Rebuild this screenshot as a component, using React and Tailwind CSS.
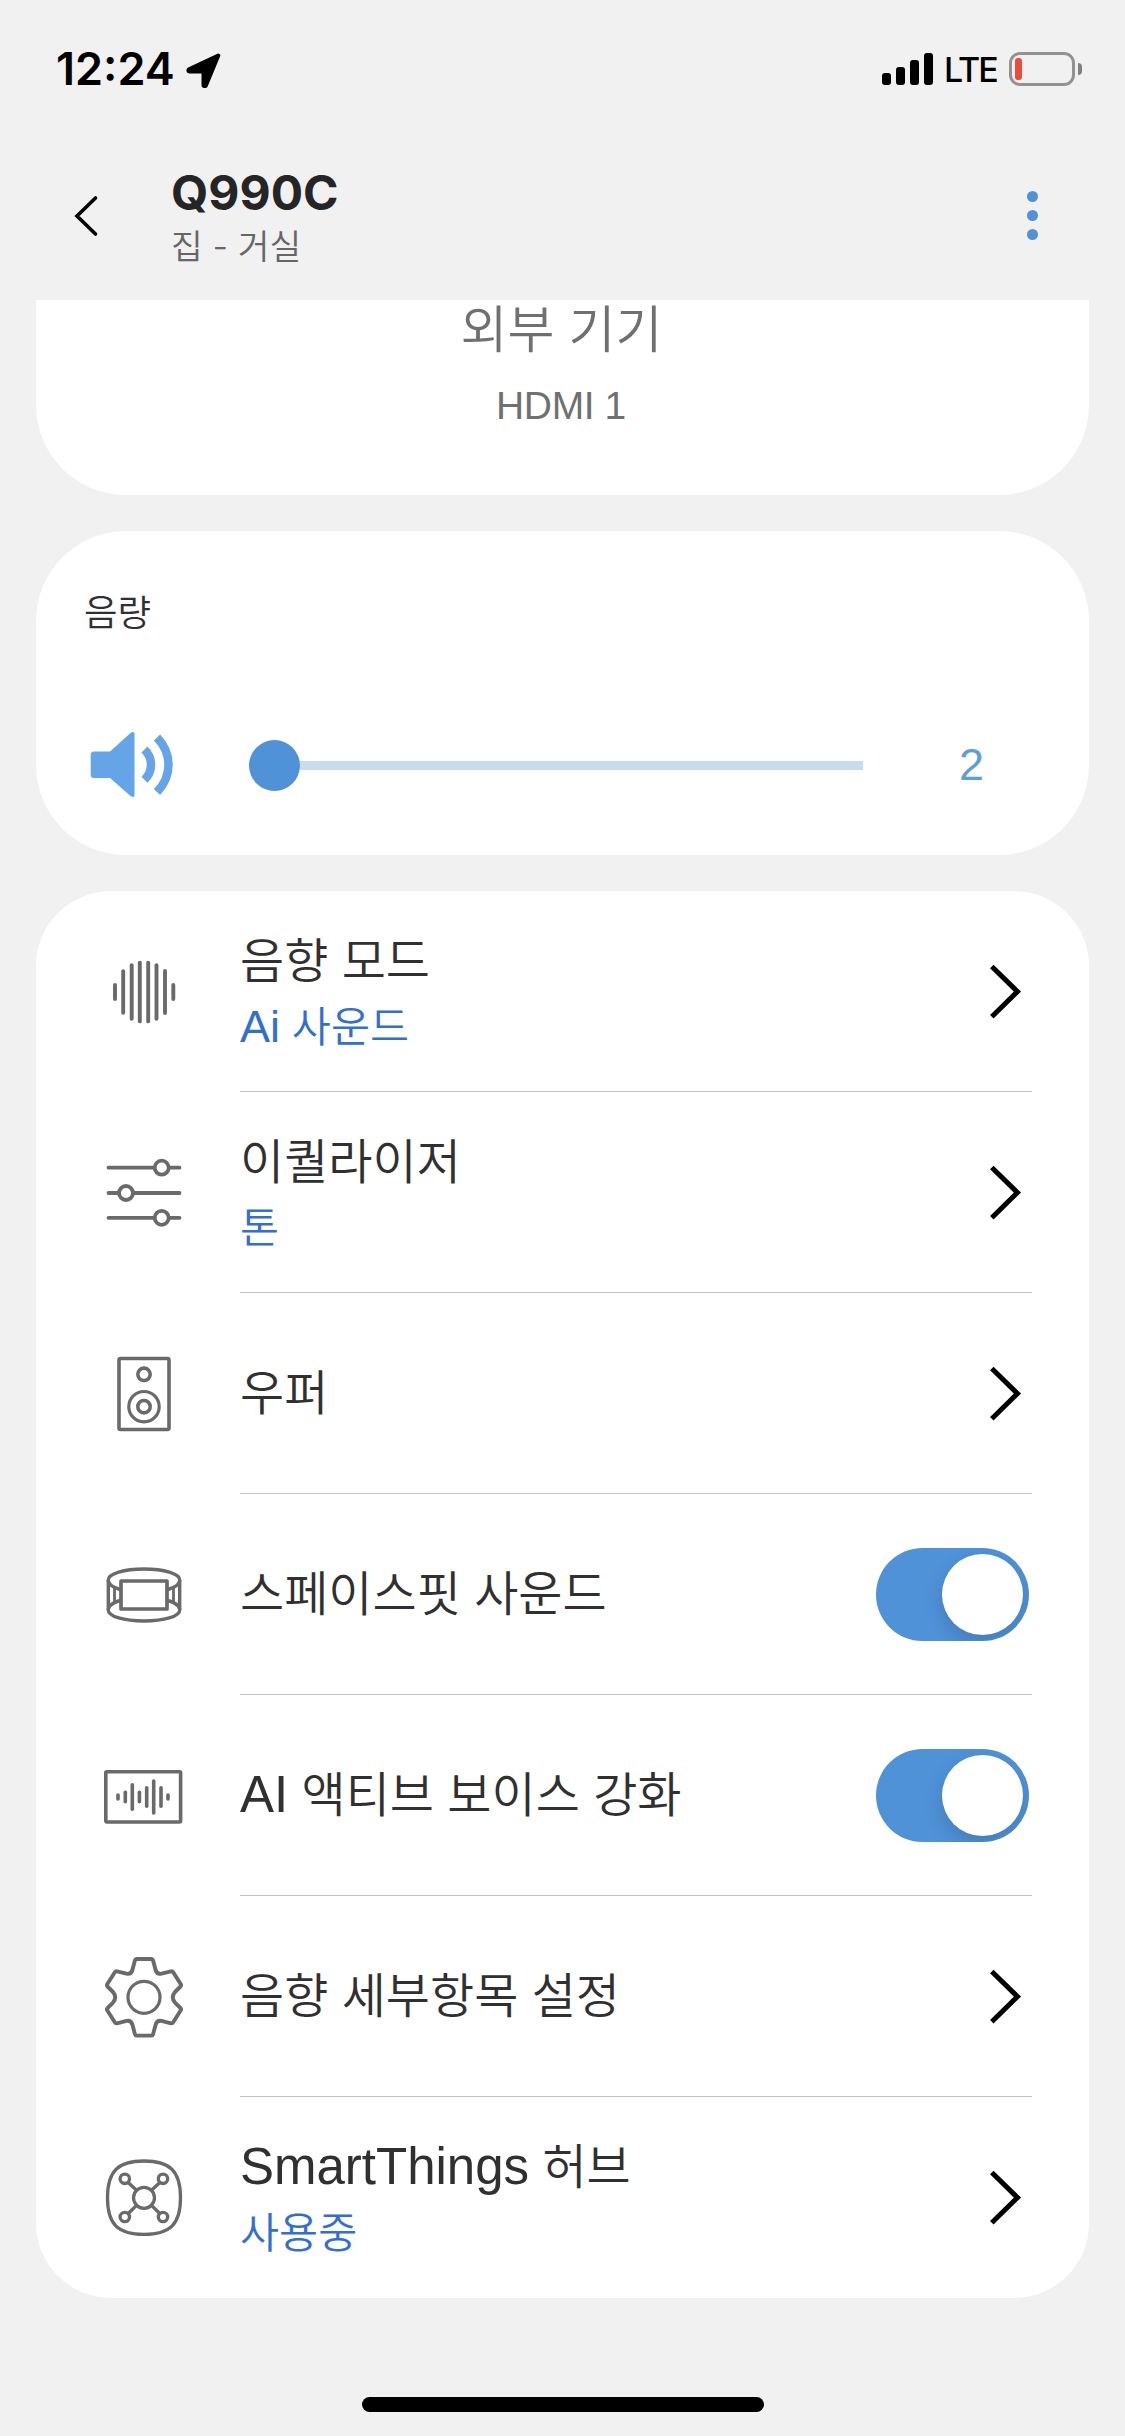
import { useState } from 'react'

/* ------------------ Icons ------------------ */

function LineIcon({ children, width = 3.6 }) {
  return (
    <svg viewBox="0 0 84 84" className="mt-px h-[84px] w-[84px] shrink-0" fill="none" stroke="#6a6a6a" strokeWidth={width} strokeLinecap="round" strokeLinejoin="round">
      {children}
    </svg>
  )
}

// vertical bars centred on cy: [x, half height]
function Bars({ items, cy }) {
  return items.map(([x, h]) => <line key={x} x1={x} x2={x} y1={cy - h} y2={cy + h} />)
}

function SoundModeIcon() {
  const bars = [[13, 7], [21.2, 20.7], [29.7, 26.7], [37.8, 29.4], [46.2, 29.4], [54.5, 26.7], [63, 21], [71.3, 7]]
  return <LineIcon width={3.9}><Bars items={bars} cy={42} /></LineIcon>
}

function EqualizerIcon() {
  return (
    <LineIcon width={3.8}>
      <path d="M6.5 16.7H52.5M67 16.7H77.5M6.5 42H17M31 42H77.5M6.5 66.8H52.5M67 66.8H77.5" />
      <circle cx="59.7" cy="16.7" r="7" />
      <circle cx="24" cy="42" r="7" />
      <circle cx="59.7" cy="66.8" r="7" />
    </LineIcon>
  )
}

function WooferIcon() {
  return (
    <LineIcon>
      <rect x="17" y="6.5" width="50" height="71" rx="1.5" />
      <circle cx="42" cy="22.3" r="6.2" />
      <circle cx="42" cy="54.7" r="15.2" strokeWidth="3.2" />
      <circle cx="42" cy="54.7" r="6.2" />
    </LineIcon>
  )
}

function SpaceFitIcon() {
  return (
    <LineIcon width={3.4}>
      <path d="M6.3 27C6.3 20.5 22 16 42 16S77.7 20.5 77.7 27V57C77.7 63.5 62 68 42 68S6.3 63.5 6.3 57Z" />
      <rect x="19" y="28" width="46" height="28" strokeWidth="3.7" />
      <path d="M6.3 28C7.5 32.5 11 34.5 18 36.5M6.3 56C7.5 51.5 11 49.5 18 47.5M77.7 28C76.5 32.5 73 34.5 66 36.5M77.7 56C76.5 51.5 73 49.5 66 47.5" />
      <path d="M12.5 35V49M71.5 35V49" strokeWidth="2.8" />
    </LineIcon>
  )
}

function VoiceIcon() {
  const bars = [[16, 2], [23.3, 4.8], [30.3, 12.2], [37.4, 4.8], [44.7, 9.2], [51.7, 16], [59, 9.2], [66, 2]]
  return (
    <LineIcon>
      <rect x="3.8" y="17.8" width="74.8" height="50.2" rx="1" />
      <Bars items={bars} cy={43} />
    </LineIcon>
  )
}

function GearIcon() {
  return (
    <LineIcon width={3.9}>
      <path d="M34.5 4H49.5Q50.7 4 51 5.2L53.5 14.5Q54.8 19.8 59.5 18.7L69 16.3Q70.4 16 71.2 17.3L78.8 29.3Q79.5 30.5 78.5 31.5L73 37Q68.5 42.3 73 47.6L78.5 53.1Q79.5 54.1 78.8 55.3L71.2 67.3Q70.4 68.6 69 68.3L59.5 65.9Q54.8 64.8 53.5 70.1L51 79.4Q50.7 80.6 49.5 80.6H34.5Q33.3 80.6 33 79.4L30.5 70.1Q29.2 64.8 24.5 65.9L15 68.3Q13.6 68.6 12.8 67.3L5.2 55.3Q4.5 54.1 5.5 53.1L11 47.6Q15.5 42.3 11 37L5.5 31.5Q4.5 30.5 5.2 29.3L12.8 17.3Q13.6 16 15 16.3L24.5 18.7Q29.2 19.8 30.5 14.5L33 5.2Q33.3 4 34.5 4Z" />
      <circle cx="42" cy="42.3" r="16" strokeWidth="3.2" />
    </LineIcon>
  )
}

function HubIcon() {
  return (
    <LineIcon width={3.3}>
      <path d="M42 5C68 5 78.5 15 78.5 41.7S68 78.4 42 78.4S5.5 68.5 5.5 41.7S16 5 42 5Z" />
      <circle cx="42" cy="41.8" r="10.5" />
      <path d="M26.2 26.5L34.5 34.3M57.8 26.5L49.5 34.3M26.2 57.5L34.5 49.3M57.8 57.5L49.5 49.3" />
      <circle cx="22.8" cy="22.8" r="4.7" />
      <circle cx="61" cy="22.8" r="4.7" />
      <circle cx="22.8" cy="61" r="4.7" />
      <circle cx="61" cy="61" r="4.7" />
    </LineIcon>
  )
}

function SpeakerIcon() {
  return (
    <svg viewBox="0 0 84 68" className="h-[68px] w-[84px]" fill="#64a4e7">
      <path d="M4 20.5H20L40.5 2Q44.5-.5 44.5 3V64Q44.5 67.5 40.5 65L20 47H4Q.7 47 .7 43.5V24Q.7 20.5 4 20.5Z" />
      <g fill="none" stroke="#64a4e7">
        <path d="M54.5 18.5Q61 25 61 33.7T54.5 48.7" strokeWidth="8.5" />
        <path d="M67 6.5Q78.5 18.5 78.5 33.7T67 61" strokeWidth="8.5" />
      </g>
    </svg>
  )
}

function Chevron() {
  return (
    <svg viewBox="0 0 32 56" className="mr-[10px] h-[56px] w-[32px] shrink-0" fill="none" stroke="#000" strokeWidth="5">
      <path d="M1.8 3.5L27.5 28.6L1.8 53.7" />
    </svg>
  )
}

/* ------------------ Data ------------------ */

const ROWS = [
  { id: 'mode', icon: SoundModeIcon, title: '음향 모드', subLatin: 'Ai', sub: ' 사운드' },
  { id: 'eq', icon: EqualizerIcon, title: '이퀄라이저', sub: '톤' },
  { id: 'woofer', icon: WooferIcon, title: '우퍼' },
  { id: 'spacefit', icon: SpaceFitIcon, title: '스페이스핏 사운드', toggle: true },
  { id: 'voice', icon: VoiceIcon, latin: 'AI', title: ' 액티브 보이스 강화', toggle: true },
  { id: 'detail', icon: GearIcon, title: '음향 세부항목 설정' },
  { id: 'hub', icon: HubIcon, latin: 'SmartThings', title: ' 허브', sub: '사용중' },
]

/* ------------------ Parts ------------------ */

function StatusBar() {
  return (
    <div className="flex h-[138px] items-center justify-between pr-[43px] pl-[56px] font-['Inter',sans-serif] text-black">
      <div className="flex items-center gap-[11px]">
        <span className="text-[45px] leading-[60px] font-semibold">12:24</span>
        <svg viewBox="0 0 36 36" className="mt-[2px] h-[36px] w-[36px]" stroke="#000" strokeWidth="4" strokeLinejoin="round">
          <path d="M32.3 3.5L3 17.3Q1.5 19.2 3.5 19.5H17.5V33.5Q18.8 35 19.9 33.5Z" />
        </svg>
      </div>
      <div className="flex items-center">
        <div className="flex h-[32px] items-end gap-[5px]">
          <div className="h-[12px] w-[9px] rounded-[3px] bg-black" />
          <div className="h-[18px] w-[9px] rounded-[3px] bg-black" />
          <div className="h-[25px] w-[9px] rounded-[3px] bg-black" />
          <div className="h-[32px] w-[9px] rounded-[3px] bg-black" />
        </div>
        <span className="ml-[11px] w-[65px] pt-[2px] text-[34px] leading-[44px] font-medium tracking-[-2px]">LTE</span>
        <div className="h-[34px] w-[66px] rounded-[11px] border-[3px] border-[#929292] p-[3px]">
          <div className="h-[22px] w-[7px] rounded-[3px] bg-[#eb4d3d]" />
        </div>
        <div className="ml-[3px] h-[12px] w-[4px] rounded-r-full bg-[#808080]" />
      </div>
    </div>
  )
}

function Header() {
  return (
    <header className="flex h-[162px] items-start pr-[87px] pl-[72px]">
      <svg viewBox="0 0 28 42" className="mt-[57px] h-[42px] w-[28px]" fill="none" stroke="#000" strokeWidth="3.6" strokeLinecap="round">
        <path d="M23.5 3L5 21L23.5 39" />
      </svg>
      <div className="mt-[25px] ml-[71px] flex-1">
        <h1 className="font-['Inter',sans-serif] text-[48px] leading-[60px] font-bold text-[#252525]">Q990C</h1>
        <p className="font-['Inter','Noto_Sans_CJK_KR',sans-serif] text-[34.5px] leading-[48px] font-[350] text-[#666]">집 - 거실</p>
      </div>
      <div className="mt-[53px] flex flex-col gap-[8px]">
        <span className="h-[11px] w-[11px] rounded-full bg-[#4f92d8]" />
        <span className="h-[11px] w-[11px] rounded-full bg-[#4f92d8]" />
        <span className="h-[11px] w-[11px] rounded-full bg-[#4f92d8]" />
      </div>
    </header>
  )
}

function Volume({ value }) {
  return (
    <section className="mt-[36px] h-[324px] rounded-[90px] bg-white pl-[48px]">
      <h2 className="pt-[58px] text-[36.5px] leading-[50px] font-[350] text-[#303030]">음량</h2>
      <div className="mt-[91px] flex h-[70px] items-center pl-[6px]">
        <SpeakerIcon />
        <div className="ml-[75px] flex items-center">
          <div className="h-[51px] w-[51px] rounded-full bg-[#4f92d8]" />
          <div className="h-[9px] w-[563px] bg-[#c7dced]" />
        </div>
        <span className="ml-[96px] text-[45px] leading-[50px] text-[#5b9fdc]">{value}</span>
      </div>
    </section>
  )
}

function Toggle({ on, onClick }) {
  return (
    <button onClick={onClick} className={`mt-px mr-[3px] flex h-[93px] w-[153px] shrink-0 items-center overflow-hidden rounded-full p-[6px] ${on ? 'justify-end bg-[#4f92d8]' : 'justify-start bg-[#c8c8c8]'}`}>
      <span className="h-[81px] w-[81px] rounded-full bg-white shadow-[0_8px_20px_rgba(0,0,0,0.15)]" />
    </button>
  )
}

function Row({ row, last, on, onToggle }) {
  const Icon = row.icon
  return (
    <li className="flex h-[201px] items-center pr-[57px] pl-[66px]">
      <Icon />
      <div className={`ml-[54px] flex h-full flex-1 items-center justify-between border-b ${last ? 'border-transparent' : 'border-[#c4c4c4]'}`}>
        <div className={`whitespace-pre ${row.sub ? 'pt-[4px]' : 'pt-px'}`}>
          <p className="text-[48px] leading-[60px] font-[350] text-[#303030]">
            {row.latin && <span className="text-[51px] leading-none font-normal">{row.latin}</span>}{row.title}
          </p>
          {row.sub && (
            <p className="mt-[9px] text-[42.5px] leading-[54px] font-[350] text-[#346fd0]">
              {row.subLatin && <span className="text-[45px] leading-none font-normal">{row.subLatin}</span>}{row.sub}
            </p>
          )}
        </div>
        {row.toggle ? <Toggle on={on} onClick={onToggle} /> : <Chevron />}
      </div>
    </li>
  )
}

export default function App() {
  const [toggles, setToggles] = useState({ spacefit: true, voice: true })

  const flip = id => setToggles(t => ({ ...t, [id]: !t[id] }))

  return (
    <div className="flex h-[2436px] w-[1125px] flex-col overflow-hidden bg-[#f1f1f1] font-['Liberation_Sans','Noto_Sans_CJK_KR',sans-serif]">
      <StatusBar />
      <Header />
      <main className="px-[36px]">
        <section className="h-[195px] rounded-b-[90px] bg-white text-center text-[#707070]">
          <p className="mr-[2px] pt-px text-[51px] leading-[60px] font-[350]">외부 기기</p>
          <p className="mr-[3px] pt-[19px] text-[39px] leading-[52px] tracking-[-0.4px]">HDMI 1</p>
        </section>
        <Volume value={2} />
        <ul className="mt-[36px] rounded-[75px] bg-white">
          {ROWS.map((row, i) => (
            <Row key={row.id} row={row} last={i === ROWS.length - 1} on={toggles[row.id]} onToggle={() => flip(row.id)} />
          ))}
        </ul>
      </main>
      <div className="mx-auto mt-auto mb-[24px] h-[15px] w-[402px] rounded-full bg-black" />
    </div>
  )
}
